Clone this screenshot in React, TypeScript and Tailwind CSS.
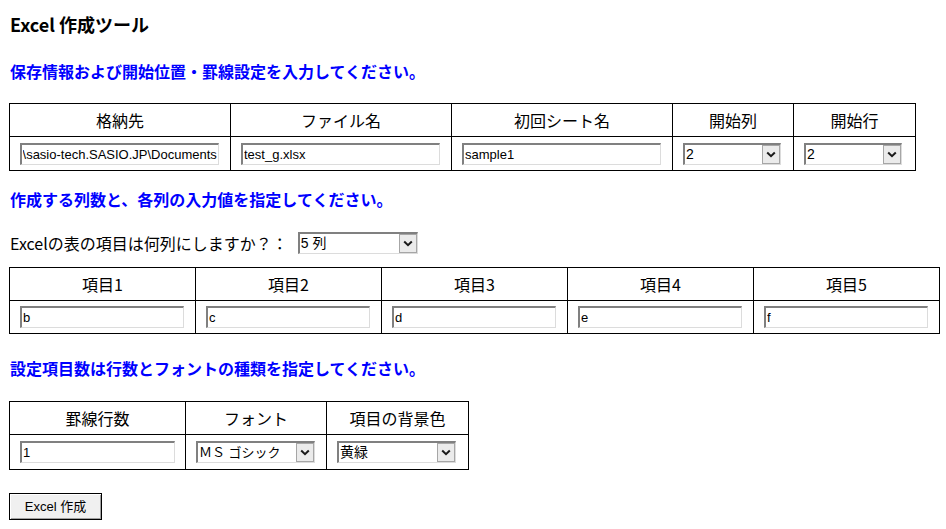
import React, { useEffect, useRef } from "react";

const jp = "font-['Noto_Sans_CJK_JP',sans-serif]";
const ctl = "font-['Liberation_Sans','Noto_Sans_CJK_JP',sans-serif]";

const fieldBorder =
  "box-border border-t-2 border-l-2 border-r border-b border-t-[#808080] border-l-[#808080] border-r-[#dcdcdc] border-b-[#dcdcdc] bg-white";

function TextBox({ value, w, scrollEnd }: { value: string; w: string; scrollEnd?: boolean }) {
  const ref = useRef<HTMLInputElement>(null);
  useEffect(() => {
    if (scrollEnd && ref.current) ref.current.scrollLeft = ref.current.scrollWidth;
  }, [scrollEnd]);
  return (
    <input
      ref={ref}
      readOnly
      defaultValue={value}
      className={`${fieldBorder} ${w} h-[22px] px-[1px] text-[13px] leading-[18px] text-black outline-none ${ctl}`}
    />
  );
}

function Chevron() {
  return (
    <svg width="10" height="7" viewBox="0 0 10 7" fill="none">
      <path d="M1.2 1.5 L5 5.2 L8.8 1.5" stroke="#1a1a1a" strokeWidth="2" />
    </svg>
  );
}

function SelectBox({ value, w, small }: { value: string; w: string; small?: boolean }) {
  return (
    <div className={`${fieldBorder} ${w} h-[22px] flex items-stretch`}>
      <span
        className={`flex-1 flex items-center pl-[1px] ${small ? "text-[13px]" : "text-[14px]"} text-black whitespace-nowrap overflow-hidden ${ctl}`}
      >
        {value}
      </span>
      <span className="w-[18px] bg-[#ebebeb] border border-[#a6a6a6] flex items-center justify-center">
        <Chevron />
      </span>
    </div>
  );
}

function Grid({
  cols,
  rows,
  headers,
  cells,
}: {
  cols: string;
  rows: string;
  headers: string[];
  cells: React.ReactNode[];
}) {
  return (
    <div className={`grid ${cols} ${rows} w-fit border-l border-t border-black`}>
      {headers.map((h) => (
        <div
          key={h}
          className={`border-r border-b border-black flex items-center justify-center text-[16px] text-black ${jp}`}
        >
          {h}
        </div>
      ))}
      {cells.map((c, i) => (
        <div key={i} className="border-r border-b border-black flex items-center pl-[10px]">
          {c}
        </div>
      ))}
    </div>
  );
}

function Heading({ children, mt }: { children: React.ReactNode; mt: string }) {
  return (
    <div className={`${mt} h-[20px] leading-[20px] pl-[1px] text-[16px] font-bold text-[#0000ff] ${jp}`}>
      {children}
    </div>
  );
}

export default function App() {
  return (
    <div className="bg-white w-[946px] min-h-[529px] pl-[9px] pt-[13px] text-black">
      <div className={`h-[22px] leading-[22px] pl-[1px] text-[18px] font-bold ${jp}`}>Excel 作成ツール</div>

      <Heading mt="mt-[26px]">保存情報および開始位置・罫線設定を入力してください。</Heading>

      <div className="mt-[22px]">
        <Grid
          cols="grid-cols-[221px_221px_221px_121px_122px]"
          rows="grid-rows-[33px_34px]"
          headers={["格納先", "ファイル名", "初回シート名", "開始列", "開始行"]}
          cells={[
            <TextBox key="a" w="w-[199px]" value="C:\Users\sasio\sasio-tech.SASIO.JP\Documents" scrollEnd />,
            <TextBox key="b" w="w-[199px]" value="test_g.xlsx" />,
            <TextBox key="c" w="w-[199px]" value="sample1" />,
            <SelectBox key="d" w="w-[98px]" value="2" />,
            <SelectBox key="e" w="w-[98px]" value="2" />,
          ]}
        />
      </div>

      <Heading mt="mt-[18px]">作成する列数と、各列の入力値を指定してください。</Heading>

      <div className="mt-[23px] h-[22px] flex items-center">
        <span className={`pl-[1px] text-[16px] ${jp}`}>Excelの表の項目は何列にしますか？：</span>
        <span className="ml-[10px]">
          <SelectBox w="w-[120px]" value="5 列" />
        </span>
      </div>

      <div className="mt-[13px]">
        <Grid
          cols="grid-cols-[186px_186px_186px_186px_186px]"
          rows="grid-rows-[33px_33px]"
          headers={["項目1", "項目2", "項目3", "項目4", "項目5"]}
          cells={["b", "c", "d", "e", "f"].map((v) => (
            <TextBox key={v} w="w-[164px]" value={v} />
          ))}
        />
      </div>

      <Heading mt="mt-[24px]">設定項目数は行数とフォントの種類を指定してください。</Heading>

      <div className="mt-[23px]">
        <Grid
          cols="grid-cols-[176px_141px_142px]"
          rows="grid-rows-[33px_35px]"
          headers={["罫線行数", "フォント", "項目の背景色"]}
          cells={[
            <TextBox key="a" w="w-[155px]" value="1" />,
            <SelectBox key="b" w="w-[119px]" value="ＭＳ ゴシック" small />,
            <SelectBox key="c" w="w-[119px]" value="黄緑" />,
          ]}
        />
      </div>

      <button
        className={`mt-[23px] w-[93px] h-[27px] bg-[#f0f0f0] border border-black shadow-[inset_1px_1px_0_#ffffff,inset_-1px_-1px_0_#a0a0a0] text-[13px] text-black ${ctl}`}
      >
        Excel 作成
      </button>
    </div>
  );
}
